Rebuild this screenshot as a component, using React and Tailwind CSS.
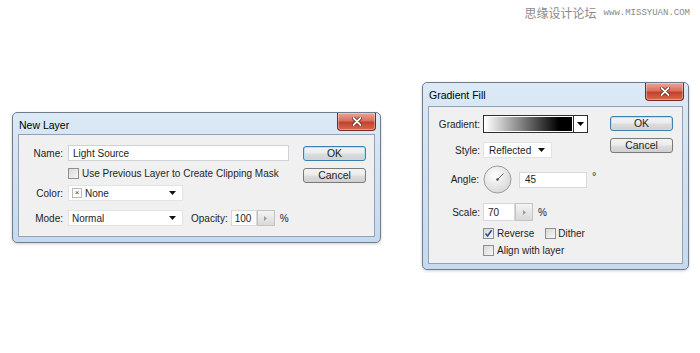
const UI = "font-['Liberation_Sans',Arial,sans-serif] text-[10px] text-[#1e1e1e]";

function CloseBtn() {
  return (
    <div className="flex items-center justify-center w-[39px] h-[18px] rounded-b-[4px] border border-t-0 border-[#7a2a20] bg-[linear-gradient(to_bottom,#eaa595_0%,#d9705e_45%,#c4412e_55%,#d66a4f_100%)] shadow-[inset_0_0_0_1px_rgba(255,255,255,0.35)]">
      <svg width="10" height="9" viewBox="0 0 10 9">
        <path d="M1.5 1 L8.5 8 M8.5 1 L1.5 8" stroke="#5a1a12" strokeWidth="3.4" strokeLinecap="round" />
        <path d="M1.5 1 L8.5 8 M8.5 1 L1.5 8" stroke="#fff" strokeWidth="1.8" strokeLinecap="round" />
      </svg>
    </div>
  );
}

function Dialog({ title, titleH, className, children }) {
  return (
    <div className={`flex flex-col rounded-[5px] border border-[#6f7c8b] bg-[linear-gradient(to_bottom,#dce9f6,#c6d9ee)] shadow-[0_1px_3px_rgba(0,0,0,0.2)] ${className}`}>
      <div className={`flex justify-between items-start pl-[6px] pr-[4px] ${titleH}`}>
        <span className="mt-[5px] text-[10.5px] text-black">{title}</span>
        <CloseBtn />
      </div>
      <div className="mx-[5px] mb-[5px] flex-1 flex border border-[#8fa2b7] bg-[#f0f0f0]">{children}</div>
    </div>
  );
}

function Button({ label, def }) {
  return (
    <div
      className={`flex items-center justify-center rounded-[3px] border bg-[linear-gradient(to_bottom,#f3f3f3_0%,#ebebeb_48%,#dddddd_52%,#d0d0d0_100%)] text-[10.5px] ${
        def ? "border-[#3c7fb1] shadow-[inset_0_0_0_1px_#aee4f8]" : "border-[#7a7a7a]"
      } w-[63px] h-[15px]`}
    >
      {label}
    </div>
  );
}

function Arrow({ color = "#111" }) {
  return (
    <svg width="7" height="4" viewBox="0 0 7 4">
      <path d="M0 0 H7 L3.5 4 Z" fill={color} />
    </svg>
  );
}

function Select({ w, children }) {
  return (
    <div className={`flex items-center justify-between h-[16px] bg-white border border-[#e2e3e5] pl-[3px] pr-[6px] ${w}`}>
      <div className="flex items-center">{children}</div>
      <Arrow />
    </div>
  );
}

function Checkbox({ checked }) {
  return (
    <div className="flex items-center justify-center w-[11px] h-[11px] border border-[#8e8f8f] bg-[linear-gradient(135deg,#d8d8d8,#f7f7f7)]">
      {checked && (
        <svg width="9" height="9" viewBox="0 0 9 9">
          <path d="M1.5 4.5 L3.6 7 L7.6 1.2" stroke="#2a4d95" strokeWidth="1.6" fill="none" />
        </svg>
      )}
    </div>
  );
}

function Stepper({ h }) {
  return (
    <div className={`flex items-center justify-center w-[18px] ${h} border border-[#c4c4c4] bg-[linear-gradient(to_bottom,#f4f4f4,#d9d9d9)]`}>
      <svg width="3" height="5" viewBox="0 0 3 5">
        <path d="M0 0 L3 2.5 L0 5 Z" fill="#9a9a9a" />
      </svg>
    </div>
  );
}

function NewLayer() {
  return (
    <Dialog title="New Layer" titleH="h-[21px]" className="w-[369px] h-[131px] mt-[112px]">
      <div className="w-[284px] flex flex-col pt-[10px]">
        <div className="flex items-center h-[16px]">
          <span className="w-[44px] text-right">Name:</span>
          <div className="ml-[5px] w-[221px] h-[16px] bg-white border border-[#cfd3d8] flex items-center pl-[4px]">Light Source</div>
        </div>
        <div className="flex items-center h-[16px] mt-[4px] pl-[49px]">
          <Checkbox />
          <span className="ml-[3px]">Use Previous Layer to Create Clipping Mask</span>
        </div>
        <div className="flex items-center h-[16px] mt-[4px]">
          <span className="w-[44px] text-right">Color:</span>
          <div className="ml-[5px]">
            <Select w="w-[115px]">
              <div className="flex items-center justify-center w-[10px] h-[10px] border border-[#b8b8b8] text-[8px] leading-none text-[#444]">×</div>
              <span className="ml-[3px]">None</span>
            </Select>
          </div>
        </div>
        <div className="flex items-center h-[16px] mt-[9px]">
          <span className="w-[44px] text-right">Mode:</span>
          <div className="ml-[5px]">
            <Select w="w-[115px]">
              <span>Normal</span>
            </Select>
          </div>
          <span className="ml-[8px]">Opacity:</span>
          <div className="ml-[3px] w-[26px] h-[16px] bg-white border border-[#d5d8dc] flex items-center pl-[3px]">100</div>
          <Stepper h="h-[16px]" />
          <span className="ml-[5px]">%</span>
        </div>
      </div>
      <div className="flex flex-col gap-[7px] pt-[11px]">
        <Button label="OK" def />
        <Button label="Cancel" />
      </div>
    </Dialog>
  );
}

function AngleDial() {
  return (
    <svg width="29" height="29" viewBox="0 0 29 29">
      <defs>
        <radialGradient id="dial" cx="40%" cy="35%" r="70%">
          <stop offset="0%" stopColor="#ffffff" />
          <stop offset="100%" stopColor="#d6d6d6" />
        </radialGradient>
      </defs>
      <circle cx="14.5" cy="14.5" r="13.5" fill="url(#dial)" stroke="#9c9c9c" />
      <line x1="14.5" y1="14.5" x2="20.5" y2="8.5" stroke="#6a6a6a" strokeWidth="1" />
      <circle cx="14.5" cy="14.5" r="1.2" fill="#444" />
    </svg>
  );
}

function GradientFill() {
  return (
    <Dialog title="Gradient Fill" titleH="h-[23px]" className="w-[267px] h-[188px] mt-[82px] ml-[41px]">
      <div className="w-[181px] flex flex-col pt-[8px]">
        <div className="flex items-center h-[18px]">
          <span className="w-[51px] text-right">Gradient:</span>
          <div className="ml-[3px] flex w-[105px] h-[18px] border border-[#2e2e2e] bg-white">
            <div className="flex-1 m-[1px] bg-[linear-gradient(to_right,#ffffff,#000000_85%)]" />
            <div className="w-[14px] flex items-center justify-center border-l border-[#2e2e2e]">
              <Arrow color="#000" />
            </div>
          </div>
        </div>
        <div className="flex items-center h-[16px] mt-[9px]">
          <span className="w-[51px] text-right">Style:</span>
          <div className="ml-[3px]">
            <Select w="w-[69px]">
              <span className="ml-[2px]">Reflected</span>
            </Select>
          </div>
        </div>
        <div className="flex items-center h-[29px] mt-[7px]">
          <span className="w-[50px] text-right">Angle:</span>
          <div className="ml-[4px]">
            <AngleDial />
          </div>
          <div className="ml-[7px] w-[68px] h-[16px] bg-white border border-[#d5d8dc] flex items-center pl-[5px]">45</div>
          <span className="ml-[5px] -mt-[6px] text-[11px] leading-none">°</span>
        </div>
        <div className="flex items-center h-[18px] mt-[9px]">
          <span className="w-[51px] text-right">Scale:</span>
          <div className="ml-[3px] w-[32px] h-[18px] bg-white border border-[#d5d8dc] flex items-center pl-[4px]">70</div>
          <Stepper h="h-[18px]" />
          <span className="ml-[5px]">%</span>
        </div>
        <div className="flex items-center h-[14px] mt-[5px] pl-[54px]">
          <Checkbox checked />
          <span className="ml-[3px]">Reverse</span>
          <div className="ml-[11px]">
            <Checkbox />
          </div>
          <span className="ml-[2px]">Dither</span>
        </div>
        <div className="flex items-center h-[14px] mt-[3px] pl-[54px]">
          <Checkbox />
          <span className="ml-[3px]">Align with layer</span>
        </div>
      </div>
      <div className="flex flex-col gap-[7px] pt-[9px]">
        <Button label="OK" def />
        <Button label="Cancel" />
      </div>
    </Dialog>
  );
}

export default function App() {
  return (
    <div className={`relative w-[700px] h-[353px] bg-white overflow-hidden ${UI}`}>
      <div className="absolute top-[7px] right-[10px] flex items-center text-[#8a8a8a]">
        <span className="font-['Noto_Sans_CJK_SC',sans-serif] text-[12px] leading-none">思缘设计论坛</span>
        <span className="ml-[7px] font-['Liberation_Mono',monospace] text-[9px] leading-none">www.MISSYUAN.COM</span>
      </div>
      <div className="flex items-start pl-[12px]">
        <NewLayer />
        <GradientFill />
      </div>
    </div>
  );
}
